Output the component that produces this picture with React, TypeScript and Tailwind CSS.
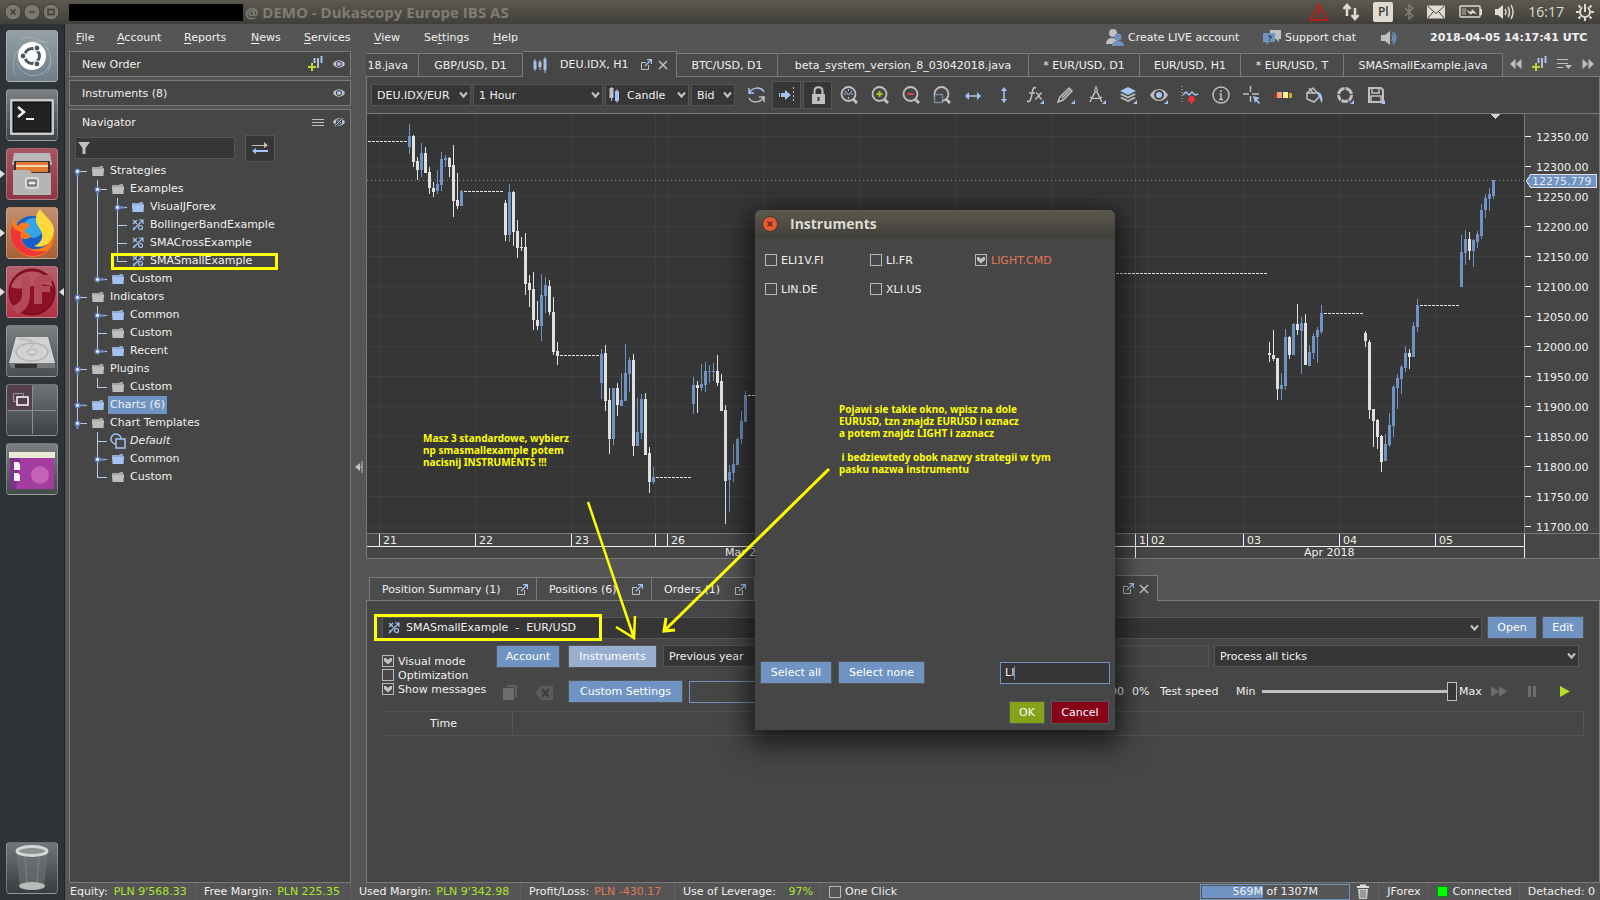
import React from 'react';
import clsx from 'clsx';

/* ---------- data ---------- */

// x, high, low, body top, body bottom, rising
type Candle = [number, number, number, number, number, 0 | 1];

const candles: Candle[] = [
    [409, 124, 154, 136, 147, 1], [413, 135, 167, 136, 162, 0], [417, 157, 180, 161, 170, 0], [421, 143, 177, 153, 170, 1],
    [425, 147, 173, 153, 173, 0], [429, 167, 194, 172, 188, 0], [433, 182, 197, 188, 192, 0], [437, 170, 194, 184, 191, 1],
    [441, 152, 191, 159, 185, 1], [445, 155, 167, 158, 160, 1], [449, 157, 177, 158, 167, 0], [453, 145, 217, 165, 201, 0],
    [457, 173, 209, 200, 206, 0], [461, 190, 206, 191, 206, 1],
    [505, 200, 241, 203, 235, 0], [509, 184, 242, 192, 235, 1], [513, 191, 246, 192, 232, 0], [517, 220, 258, 231, 248, 0],
    [521, 237, 251, 247, 248, 0], [525, 233, 295, 247, 284, 0], [529, 275, 307, 283, 290, 0], [533, 272, 330, 289, 320, 0],
    [537, 301, 330, 320, 326, 0], [541, 274, 341, 295, 326, 1], [545, 277, 313, 285, 296, 1], [549, 280, 315, 286, 312, 0],
    [553, 297, 355, 312, 352, 0], [557, 342, 365, 351, 356, 0],
    [601, 349, 399, 354, 383, 1], [605, 345, 411, 353, 401, 0], [609, 388, 454, 400, 439, 0], [613, 388, 445, 388, 439, 1],
    [617, 383, 416, 388, 405, 0], [621, 373, 406, 400, 406, 1], [625, 344, 401, 373, 401, 1], [629, 357, 392, 360, 374, 1],
    [633, 354, 456, 360, 446, 0], [637, 398, 446, 432, 446, 1], [641, 394, 439, 399, 433, 1], [645, 393, 455, 399, 455, 0],
    [649, 447, 493, 453, 482, 0], [653, 467, 484, 477, 482, 1],
    [693, 377, 414, 385, 404, 1], [697, 381, 413, 385, 388, 0], [701, 364, 391, 384, 388, 1], [705, 362, 392, 371, 385, 1],
    [709, 365, 383, 371, 372, 1], [713, 363, 381, 371, 372, 1], [717, 355, 386, 371, 383, 0], [721, 374, 411, 381, 411, 0],
    [725, 405, 524, 410, 481, 0], [729, 465, 512, 472, 480, 1], [733, 444, 482, 464, 473, 1], [737, 438, 465, 439, 465, 1],
    [741, 411, 444, 421, 439, 1], [745, 391, 422, 395, 422, 1],
    [1269, 342, 362, 353, 355, 0], [1273, 330, 361, 355, 359, 0], [1277, 358, 400, 358, 389, 0], [1281, 373, 400, 385, 389, 1],
    [1285, 329, 390, 337, 386, 1], [1289, 336, 359, 337, 355, 0], [1293, 323, 355, 324, 355, 1], [1297, 304, 335, 324, 330, 0],
    [1301, 317, 374, 323, 331, 1], [1305, 314, 365, 323, 365, 0], [1309, 345, 366, 352, 366, 1], [1313, 333, 359, 336, 353, 1],
    [1317, 327, 363, 330, 337, 1], [1321, 305, 334, 313, 332, 1],
    [1365, 331, 347, 333, 341, 0], [1369, 340, 419, 342, 410, 0], [1373, 409, 447, 409, 421, 0], [1377, 419, 449, 420, 437, 0],
    [1381, 435, 472, 436, 462, 0], [1385, 434, 461, 444, 461, 1], [1389, 413, 447, 425, 445, 1], [1393, 385, 437, 387, 426, 1],
    [1397, 374, 409, 378, 388, 1], [1401, 365, 394, 367, 379, 1], [1405, 346, 372, 353, 368, 1], [1409, 349, 369, 353, 357, 0],
    [1413, 322, 357, 326, 357, 1], [1417, 299, 332, 305, 327, 1],
    [1461, 235, 287, 252, 287, 1], [1465, 230, 265, 239, 253, 1], [1469, 232, 260, 239, 251, 0], [1473, 239, 267, 240, 251, 1],
    [1477, 231, 248, 234, 242, 1], [1481, 204, 239, 210, 236, 1], [1485, 194, 218, 198, 210, 1], [1489, 188, 211, 194, 199, 1],
    [1493, 180, 199, 180, 196, 1],
];

// x from, x to, y
const gaps = [
    [368, 407, 141], [464, 503, 191], [560, 599, 355], [656, 691, 477], [748, 800, 395],
    [1100, 1267, 273], [1324, 1363, 313], [1420, 1459, 305],
];

const prices = [
    '12350.00', '12300.00', '12250.00', '12200.00', '12150.00', '12100.00', '12050.00',
    '12000.00', '11950.00', '11900.00', '11850.00', '11800.00', '11750.00', '11700.00',
];

const gridX = [379, 475, 571, 655, 667, 763, 859, 955, 1051, 1135, 1147, 1243, 1339, 1435];

const days: [number, string][] = [
    [379, '21'], [475, '22'], [571, '23'], [655, ''], [667, '26'],
    [1135, '1'], [1147, '02'], [1243, '03'], [1339, '04'], [1435, '05'],
];

type Row = { guides: string; icon: 'grey' | 'blue' | 'strategy' | 'template'; label: string; mark?: 'selected' | 'box' | 'italic' };

// E/e/x expanded node (middle, first, last), C/c collapsed node (middle, last), t tee, l corner
const tree: Row[] = [
    { guides: 'e', icon: 'grey', label: 'Strategies' },
    { guides: '|E', icon: 'grey', label: 'Examples' },
    { guides: '||C', icon: 'blue', label: 'VisualJForex' },
    { guides: '||t', icon: 'strategy', label: 'BollingerBandExample' },
    { guides: '||t', icon: 'strategy', label: 'SMACrossExample' },
    { guides: '||l', icon: 'strategy', label: 'SMASmallExample', mark: 'box' },
    { guides: '|c', icon: 'blue', label: 'Custom' },
    { guides: 'E', icon: 'grey', label: 'Indicators' },
    { guides: '|C', icon: 'blue', label: 'Common' },
    { guides: '|t', icon: 'grey', label: 'Custom' },
    { guides: '|c', icon: 'blue', label: 'Recent' },
    { guides: 'E', icon: 'grey', label: 'Plugins' },
    { guides: '|l', icon: 'grey', label: 'Custom' },
    { guides: 'C', icon: 'blue', label: 'Charts (6)', mark: 'selected' },
    { guides: 'x', icon: 'grey', label: 'Chart Templates' },
    { guides: ' t', icon: 'template', label: 'Default', mark: 'italic' },
    { guides: ' C', icon: 'blue', label: 'Common' },
    { guides: ' l', icon: 'grey', label: 'Custom' },
];

/* ---------- small icons ---------- */

const G = '#c0c0c0';
const B = '#a3c4f3';

function Svg({ w, h, children, className }: { w: number; h: number; children: React.ReactNode; className?: string }) {
    return (
        <svg width={w} height={h} viewBox={`0 0 ${w} ${h}`} fill="none" className={clsx('shrink-0', className)} aria-hidden="true">
            {children}
        </svg>
    );
}

function Folder({ color }: { color: string }) {
    return (
        <Svg w={12} h={12}>
            <path d="M0 3V2h7l1-1h3v2h1v1H0z" fill={color} opacity=".8" />
            <path d="M0 4h12l-.5 7H.5z" fill={color} />
        </Svg>
    );
}

function StrategyIcon() {
    return (
        <Svg w={12} h={12}>
            <path d="M1 1l4 4M5 1L1 5M1 11L11 1M7 1h4v4" stroke={B} strokeWidth="1.2" />
            <circle cx="8.5" cy="8.5" r="2" stroke={B} strokeWidth="1.2" />
            <path d="M2 8v3" stroke={B} />
        </Svg>
    );
}

function TemplateIcon() {
    return (
        <Svg w={16} h={16}>
            <circle cx="6" cy="6" r="5" stroke={B} strokeWidth="1.5" />
            <path d="M6 6h9v9H6z" fill="#464646" stroke={B} strokeWidth="1.5" />
        </Svg>
    );
}

function EyeIcon({ off }: { off?: boolean }) {
    return (
        <Svg w={12} h={10}>
            <path d="M0 5C2 0 10 0 12 5 10 10 2 10 0 5z" fill={G} />
            <circle cx="6" cy="5" r="3" fill="#464646" />
            <circle cx="6" cy="5" r="2" fill={B} />
            {off && <path d="M1.500 9.500L10.500.5" stroke="#464646" strokeWidth="2.500" />}
            {off && <path d="M2 9L10 1" stroke={B} />}
        </Svg>
    );
}

function NewChartIcon() {
    return (
        <Svg w={15} h={16}>
            <path d="M4 7v8M0 11h8" stroke="#b8dc2c" strokeWidth="2" />
            <path d="M6.500 2v5M13.500 0v7" stroke={B} strokeWidth="2" />
            <path d="M10 2v10" stroke={G} strokeWidth="2" />
        </Svg>
    );
}

function Detach() {
    return (
        <Svg w={11} h={11}>
            <path d="M5 3.500H.5v7h7V6" stroke={G} />
            <path d="M4 7l6-6M6 .5h4.500V5" stroke={B} strokeWidth="1.300" />
        </Svg>
    );
}

function Cross() {
    return (
        <Svg w={10} h={10}>
            <path d="M1 1l8 8M9 1L1 9" stroke={G} strokeWidth="1.500" />
        </Svg>
    );
}

function Chevron() {
    return (
        <Svg w={9} h={8} className="pointer-events-none absolute right-[3px] top-[7px]">
            <path d="M1 1.500l3.500 4L8 1.500" stroke={G} strokeWidth="2.200" />
        </Svg>
    );
}

function PairOfArrows({ flip }: { flip?: boolean }) {
    return (
        <Svg w={12} h={10} className={flip ? 'rotate-180' : undefined}>
            <path d="M5.500 0v10L0 5zM11.500 0v10L6 5z" fill={G} />
        </Svg>
    );
}

/* ---------- controls ---------- */

function Check({ label, checked, className }: { label: string; checked?: boolean; className?: string }) {
    return (
        <label className={clsx('flex h-[14px] items-center gap-1 whitespace-nowrap', className)}>
            <span className="grid size-3">
                <input type="checkbox" defaultChecked={checked} className="peer col-start-1 row-start-1 size-3 appearance-none border border-[#b8b8b8]" />
                <svg viewBox="0 0 12 12" className="pointer-events-none invisible col-start-1 row-start-1 size-3 peer-checked:visible" fill="none" aria-hidden="true">
                    <path d="M2 3h2l2 2 2-2h2v3L6 9.500 2 6z" fill={G} />
                </svg>
            </span>
            {label}
        </label>
    );
}

function Select({ label, text, className, pad }: { label: string; text: string; className: string; pad?: string }) {
    return (
        <div className={clsx('relative h-[22px]', className)}>
            <select aria-label={label} className={clsx('h-full w-full appearance-none border border-[#555] bg-[#363636] pr-4 outline-none', pad ?? 'pl-[5px]')}>
                <option>{text}</option>
            </select>
            <Chevron />
        </div>
    );
}

function Button({ children, className }: { children: React.ReactNode; className: string }) {
    return (
        <button className={clsx('h-[23px] shrink-0 whitespace-nowrap border border-[#555] text-white', className)}>
            {children}
        </button>
    );
}

/* ---------- desktop ---------- */

function TopBar() {
    const c = '#dfdbd2';
    return (
        <header className="flex h-6 shrink-0 items-center bg-linear-to-b from-[#5c594e] to-[#403f3a] pl-1 pr-[6px] font-['Open_Sans',sans-serif]">
            <div className="flex gap-px">
                {['M5 5l5 5M10 5l-5 5', 'M4.500 7.500h6', 'M4.500 5h6v5h-6z'].map((d) => (
                    <button key={d} aria-label="Window control">
                        <Svg w={18} h={18}>
                            <circle cx="9" cy="9" r="8" fill="#7b786d" stroke="#3a3934" />
                            <path d={d} stroke="#3a3934" strokeWidth="1.300" transform="translate(1.500 1.500)" />
                        </Svg>
                    </button>
                ))}
            </div>
            <div className="ml-[9px] h-[17px] w-[174px] shrink-0 bg-black" />
            <h1 className="ml-[2px] whitespace-nowrap text-[15px] font-bold text-[#807d74]">@ DEMO - Dukascopy Europe IBS AS</h1>
            <div className="ml-auto flex items-center">
                <Svg w={20} h={20}>
                    <path d="M10 2L1 18h18z" stroke="#e01010" strokeWidth="1.300" />
                    <path d="M10 7v6M10 14.500v2" stroke="#e01010" strokeWidth="1.500" />
                </Svg>
                <Svg w={18} h={18} className="ml-[13px]">
                    <path d="M5 13V3M1.500 6L5 2l3.500 4" stroke={c} strokeWidth="2.500" />
                    <path d="M13 5v10M9.500 12l3.500 4 3.500-4" stroke={c} strokeWidth="2.500" />
                </Svg>
                <span className="ml-[13px] flex h-5 w-5 items-center justify-center rounded-xs bg-[#dfdbd2] text-xs font-semibold text-[#3c3b37]">Pl</span>
                <Svg w={10} h={16} className="ml-[11px]">
                    <path d="M1 4l8 8-4 3V1l4 3-8 8" stroke="#85827a" strokeWidth="1.300" />
                </Svg>
                <Svg w={18} h={14} className="ml-[13px]">
                    <rect width="18" height="13" y=".5" rx="1" fill={c} />
                    <path d="M1 1.500l8 7 8-7M1 13l5-6M17 13l-5-6" stroke="#45443e" />
                </Svg>
                <Svg w={24} h={14} className="ml-[14px]">
                    <rect x="1" y="1" width="20" height="11" rx="1" stroke={c} strokeWidth="1.500" />
                    <path d="M22 4v6" stroke={c} strokeWidth="2" />
                    <path d="M3 3h4v7H3z" fill="#85827a" />
                    <path d="M7 5l5 2 1-3 5 5-5-1-1 2z" fill={c} />
                </Svg>
                <Svg w={20} h={18} className="ml-3">
                    <path d="M0 6h3l5-4v14l-5-4H0z" fill={c} />
                    <path d="M10 6q2 3 0 6M13 4q3 5 0 10M16 2q4 7 0 14" stroke={c} strokeWidth="1.500" />
                </Svg>
                <span className="ml-[13px] text-sm text-[#dfdbd2]">16:17</span>
                <Svg w={18} h={18} className="ml-3">
                    <circle cx="9" cy="9" r="5" stroke={c} strokeWidth="2" />
                    <path d="M9 15v3M0 9h3M15 9h3M2.500 2.500l2 2M13.500 13.500l2 2M2.500 15.500l2-2M13.500 4.500l2-2" stroke={c} strokeWidth="2" />
                    <path d="M9 1v8" stroke="#4a4942" strokeWidth="5" />
                    <path d="M9 1v8" stroke={c} strokeWidth="2" />
                </Svg>
            </div>
        </header>
    );
}

function Tile({ tone, running, active, children }: { tone: string; running?: boolean; active?: boolean; children: React.ReactNode }) {
    return (
        <a href="#app" aria-label="Application" className="flex h-[52px] items-center">
            <Svg w={6} h={10}>{running && <path d="M0 1l5 4-5 4z" fill="#ddd" />}</Svg>
            <span className={clsx('flex size-[52px] items-center justify-center overflow-hidden rounded border border-white/25 bg-linear-to-b', tone)}>
                {children}
            </span>
            <Svg w={6} h={10}>{active && <path d="M6 1L1 5l5 4z" fill="#ddd" />}</Svg>
        </a>
    );
}

function Launcher() {
    return (
        <nav className="flex w-[65px] shrink-0 flex-col gap-[7px] border-r border-[#222] bg-[#2d3336] pb-[6px] pt-[6px]">
            <Tile tone="from-[#94a0a5] to-[#6f7f88]">
                <Svg w={50} h={50}>
                    <path d="M8 44C0 22 20 4 42 12M14 8c20-8 38 16 26 34M44 30C40 48 16 50 10 32" stroke="#b4c0c5" opacity=".6" />
                    <circle cx="25" cy="25" r="14" fill="#fff" />
                    <circle cx="25" cy="25" r="7.500" stroke="#50575b" strokeWidth="3" />
                    <g fill="#50575b" stroke="#fff" strokeWidth="1.200">
                        <circle cx="16" cy="25" r="3" />
                        <circle cx="30" cy="17" r="3" />
                        <circle cx="30" cy="33" r="3" />
                    </g>
                </Svg>
            </Tile>
            <Tile tone="from-[#7d8183] to-[#3e4446]">
                <Svg w={50} h={50}>
                    <rect x="3" y="9" width="44" height="36" rx="1" fill="#c9c9c9" />
                    <rect x="6" y="12" width="38" height="30" fill="#222" stroke="#000" />
                    <path d="M11 17l6 5-6 5" stroke="#eee" strokeWidth="2.500" />
                    <path d="M19 29h8" stroke="#eee" strokeWidth="2" />
                </Svg>
            </Tile>
            <Tile tone="from-[#a65563] to-[#8d3644]" running>
                <Svg w={50} h={50}>
                    <path d="M7 4h36l2 12H5z" fill="#b8b8b8" />
                    <path d="M7 12h36v14H7z" fill="#333" />
                    <path d="M9 13h32v10H9z" fill="#e07a35" />
                    <path d="M9 16h32v2H9z" fill="#f7d9b0" />
                    <path d="M6 21h16l3 3h19v22H6z" fill="#b5b5b5" />
                    <rect x="19" y="29" width="12" height="10" rx="2" stroke="#e8e8e8" strokeWidth="1.500" fill="#999" />
                    <path d="M21 32h8v4h-8z" fill="#eee" stroke="#555" />
                </Svg>
            </Tile>
            <Tile tone="from-[#c09070] to-[#a85f38]" running>
                <Svg w={50} h={50}>
                    <circle cx="25" cy="26" r="18" fill="#1560c8" />
                    <circle cx="26" cy="20" r="10" fill="#35a5ea" />
                    <path d="M33 1c-6 8-5 13 0 20 5 7 1 15-6 17 10 3 21-4 20-16C46 12 37 8 33 1z" fill="#ffd83a" />
                    <path d="M7 9c-7 13-4 38 18 40 14 0 23-10 22-25-2 10-8 16-17 17-9 1-15-4-15-11 3 2 7 1 9-2l-7-5 6-6c-5-4-10-3-12 1-3-2-4-5-4-9z" fill="#ff7a1a" />
                    <path d="M5 17c-4 14 3 29 19 31 7 0 12-2 16-5-17 3-28-6-26-19-4-1-7-3-9-7z" fill="#f0353a" />
                </Svg>
            </Tile>
            <Tile tone="from-[#b5606c] to-[#b03348]" running active>
                <Svg w={50} h={50}>
                    <circle cx="25" cy="25" r="23" fill="#8c1223" stroke="#5e0a17" />
                    <path d="M4 20a22 22 0 0 1 42 0c-14-8-28 6-42 0z" fill="#d88a94" opacity=".55" />
                    <path d="M15 9h8v18c0 10-4 17-13 20l-6-8c8-2 11-5 11-13z" fill="#b24a58" />
                    <path d="M27 37V16c0-5 4-8 10-8h8v7h-6c-3 0-4 1-4 4h8v6h-8v12z" fill="#b24a58" />
                </Svg>
            </Tile>
            <Tile tone="from-[#7b7f80] to-[#4a5052]">
                <Svg w={50} h={50}>
                    <path d="M9 11h32l7 26H2z" fill="#d2d2d2" />
                    <ellipse cx="25" cy="26" rx="16" ry="9" stroke="#b3b3b3" strokeWidth="1.500" />
                    <ellipse cx="25" cy="26" rx="5" ry="3" stroke="#aaa" />
                    <path d="M12 13c10 0 18 2 12 8" stroke="#bbb" strokeWidth="2" />
                    <path d="M2 37h46v5H4z" fill="#777" />
                    <path d="M8 38h22v4H8z" fill="#333" />
                </Svg>
            </Tile>
            <Tile tone="from-[#707476] to-[#3d4345]">
                <Svg w={50} h={50}>
                    <path d="M0 0h25v25H0z" fill="#54404a" />
                    <path d="M25.500 1v48M1 25.500h48" stroke="#8b8f91" />
                    <path d="M6.500 8.500h10v8h-10z" stroke="#999" />
                    <path d="M10 12h11v8H10z" fill="#54404a" stroke="#fff" strokeWidth="1.500" />
                </Svg>
            </Tile>
            <Tile tone="from-[#7b7f80] to-[#454b4d]">
                <Svg w={50} h={50}>
                    <path d="M3 14h44v31H3z" fill="#a53da0" />
                    <circle cx="33" cy="31" r="9" fill="#cf74bf" opacity=".7" />
                    <path d="M3 14h10L9 45H3z" fill="#6d2f86" opacity=".7" />
                    <path d="M2 8h46v6H2z" fill="#ece8d8" />
                    <path d="M7 18h4l2 2v6H7zM7 29h4l2 2v6H7z" fill="#f4f4f4" />
                </Svg>
            </Tile>
            <div className="mt-auto">
                <Tile tone="from-[#70767a] to-[#373e41]">
                    <Svg w={50} h={50}>
                        <path d="M9 9h32l-4 35H13z" fill="#6f7679" opacity=".6" />
                        <ellipse cx="25" cy="43" rx="13" ry="4" fill="#b9bbb8" />
                        <ellipse cx="25" cy="8" rx="15" ry="4.500" stroke="#d6d6d6" strokeWidth="3" fill="#8d9294" />
                        <path d="M18 14l2 25M32 14l-2 25" stroke="#7a8083" />
                    </Svg>
                </Tile>
            </div>
        </nav>
    );
}

/* ---------- application ---------- */

const menuItems = [
    ['', 'F', 'ile', 'w-[41px]'],
    ['', 'A', 'ccount', 'w-[67px]'],
    ['', 'R', 'eports', 'w-[67px]'],
    ['', 'N', 'ews', 'w-[53px]'],
    ['', 'S', 'ervices', 'w-[70px]'],
    ['', 'V', 'iew', 'w-[50px]'],
    ['Se', 't', 'tings', 'w-[69px]'],
    ['', 'H', 'elp', 'w-[50px]'],
];

function MenuBar() {
    return (
        <div className="flex h-[27px] shrink-0 items-center pl-[11px] pr-[6px]">
            {menuItems.map(([a, b, c, width]) => (
                <button key={b} className={clsx('shrink-0 whitespace-nowrap text-left', width)}>
                    {a}<span className="underline underline-offset-2">{b}</span>{c}
                </button>
            ))}
            <button className="ml-auto flex w-[157px] shrink-0 items-center gap-1 whitespace-nowrap">
                <Svg w={18} h={18}>
                    <circle cx="7" cy="4" r="4" fill={G} />
                    <path d="M0 15c0-8 12-8 12 0z" fill={G} />
                    <circle cx="12" cy="8" r="3.500" fill="#6f93c2" />
                    <path d="M6 17c0-7 12-7 12 0z" fill="#6f93c2" />
                </Svg>
                Create LIVE account
            </button>
            <button className="flex w-[118px] shrink-0 items-center gap-1 whitespace-nowrap">
                <Svg w={18} h={15}>
                    <path d="M7 0h11v9h-2v3l-3-3H7z" fill={G} />
                    <path d="M0 3h12v9H6l-3 3v-3H0z" fill="#6f93c2" />
                    <path d="M5 6h3v2H6.500M6.500 9.500V11" stroke="#333" />
                </Svg>
                Support chat
            </button>
            <button aria-label="Sound" className="w-[49px] shrink-0">
                <Svg w={17} h={14}>
                    <path d="M0 4h4l5-4v14l-5-4H0z" fill={G} />
                    <path d="M11 4q2 3 0 6M12 1q5 6 0 12" stroke="#6f93c2" strokeWidth="1.800" />
                </Svg>
            </button>
            <span className="w-[164px] shrink-0 whitespace-nowrap font-bold">2018-04-05 14:17:41 UTC</span>
        </div>
    );
}

function Guide({ kind }: { kind: string }) {
    const up = 'ExCctl|'.includes(kind);
    const down = 'EeCt|'.includes(kind);
    const node = 'EexCc'.includes(kind);
    return (
        <Svg w={20} h={18}>
            {up && <path d="M7.500 0v9" stroke="#b7cbe8" />}
            {down && <path d="M7.500 9v9" stroke="#b7cbe8" />}
            {!'| '.includes(kind) && <path d="M7 9.500h10" stroke="#b7cbe8" />}
            {'Eex'.includes(kind) && <path d="M7.500 9v6" stroke="#6f93d0" strokeWidth="2" />}
            {'Cc'.includes(kind) && <path d="M7 9.500h8" stroke="#6f93d0" strokeWidth="2" />}
            {node && <circle cx="7.500" cy="9.500" r="2.200" fill="#fff" stroke="#5d80c4" strokeWidth="1.600" />}
        </Svg>
    );
}

function Navigator() {
    return (
        <section className="flex flex-1 flex-col border border-[#7a7a7a] bg-[#464646]">
            <header className="flex h-6 items-center pl-3 pr-[5px]">
                <h2>Navigator</h2>
                <button aria-label="Menu" className="ml-auto">
                    <Svg w={12} h={9}><path d="M0 1.500h12M0 4.500h12M0 7.500h12" stroke={G} /></Svg>
                </button>
                <button aria-label="Hide" className="ml-[9px]"><EyeIcon off /></button>
            </header>
            <div className="flex h-7 items-center gap-[10px] pl-[5px]">
                <label className="flex h-[22px] w-[160px] items-center border border-[#555] bg-[#363636] pl-[2px]">
                    <Svg w={12} h={12}><path d="M0 0h12L7.500 6v6h-3V6z" fill={G} /></Svg>
                    <input aria-label="Filter" className="ml-1 w-full min-w-0 bg-transparent outline-none" />
                </label>
                <button aria-label="Synchronise" className="flex h-[27px] w-[30px] items-center justify-center border border-[#555] bg-[#363636]">
                    <Svg w={16} h={12}>
                        <path d="M0 3h12V0l4 3.500L12 6V4H0z" fill={G} />
                        <path d="M16 8H4V6L0 9l4 3v-2h12z" fill={B} />
                    </Svg>
                </button>
            </div>
            <ul>
                {tree.map((row, i) => (
                    <li key={i} className="flex h-[18px] items-center">
                        {row.guides.split('').map((g, j) => <Guide key={j} kind={g} />)}
                        <span className={row.icon === 'template' ? 'flex w-[18px] shrink-0' : 'ml-[2px] flex w-4 shrink-0'}>
                            {row.icon === 'grey' && <Folder color="#bdbdbd" />}
                            {row.icon === 'blue' && <Folder color={B} />}
                            {row.icon === 'strategy' && <StrategyIcon />}
                            {row.icon === 'template' && <TemplateIcon />}
                        </span>
                        <span className={clsx('h-full whitespace-nowrap px-[2px] leading-[18px]', row.mark === 'selected' && 'bg-[#6f93c2]', row.mark === 'italic' && 'italic')}>
                            {row.label}
                        </span>
                    </li>
                ))}
            </ul>
        </section>
    );
}

function SidePanel() {
    return (
        <aside className="ml-1 flex w-[282px] shrink-0 flex-col gap-[3px]">
            <header className="flex h-[26px] items-center border border-[#7a7a7a] bg-[#464646] pl-3 pr-[5px]">
                <h2>New Order</h2>
                <button aria-label="Add" className="ml-auto"><NewChartIcon /></button>
                <button aria-label="Show" className="ml-[10px]"><EyeIcon /></button>
            </header>
            <header className="flex h-[26px] items-center border border-[#7a7a7a] bg-[#464646] pl-3 pr-[5px]">
                <h2>Instruments (8)</h2>
                <button aria-label="Show" className="ml-auto"><EyeIcon /></button>
            </header>
            <Navigator />
        </aside>
    );
}

function ChartTabs() {
    const tab = 'h-6 shrink-0 whitespace-nowrap border-y border-r border-[#7a7a7a] bg-[#4b4b4b]';
    return (
        <div className="flex h-[26px] shrink-0 items-end">
            <button className={clsx(tab, 'flex w-[53px] items-center justify-end pr-[10px]')}>18.java</button>
            <button className={clsx(tab, 'w-[104px]')}>GBP/USD, D1</button>
            <div className="flex h-[26px] w-[154px] shrink-0 items-center border-r border-t border-[#7a7a7a] bg-[#464646] pl-[10px] pr-2">
                <Svg w={14} h={16}>
                    <path d="M2 2v12M12 0v16" stroke={B} />
                    <path d="M2 4v8M12 2v11" stroke={B} strokeWidth="3" />
                    <path d="M7 3v10" stroke={G} />
                    <path d="M7 5v5" stroke={G} strokeWidth="3" />
                </Svg>
                <button className="ml-[13px] whitespace-nowrap">DEU.IDX, H1</button>
                <button aria-label="Detach" className="ml-auto mr-[6px]"><Detach /></button>
                <button aria-label="Close"><Cross /></button>
            </div>
            <button className={clsx(tab, 'w-[101px]')}>BTC/USD, D1</button>
            <button className={clsx(tab, 'w-[251px]')}>beta_system_version_8_03042018.java</button>
            <button className={clsx(tab, 'w-[111px]')}>* EUR/USD, D1</button>
            <button className={clsx(tab, 'w-[101px]')}>EUR/USD, H1</button>
            <button className={clsx(tab, 'w-[103px]')}>* EUR/USD, T</button>
            <button className={clsx(tab, 'w-[159px]')}>SMASmallExample.java</button>
            <div className="flex h-[26px] flex-1 items-center justify-end gap-[10px] border-b border-[#7a7a7a] pr-[6px]">
                <button aria-label="Previous"><PairOfArrows /></button>
                <button aria-label="New chart"><NewChartIcon /></button>
                <button aria-label="Tab list">
                    <Svg w={15} h={12}><path d="M0 1.500h11M0 5.500h11M0 9.500h6" stroke={G} /><path d="M8 7h7l-3.500 4z" fill={G} /></Svg>
                </button>
                <button aria-label="Next"><PairOfArrows flip /></button>
            </div>
        </div>
    );
}

const lens = (
    <>
        <circle cx="8.500" cy="8" r="7" stroke={G} strokeWidth="1.800" />
        <path d="M13 13l4 4" stroke={G} strokeWidth="3" />
    </>
);
const corner = <path d="M18 14v4h-4z" fill={B} />;

const tools: { name: string; pressed?: boolean; art: React.ReactNode }[] = [
    { name: 'Refresh', art: <><path d="M2 8c2-7 12-8 15-2M2 2v5h5" stroke={B} strokeWidth="1.500" /><path d="M17 10c-2 7-12 8-15 2M17 16v-5h-5" stroke={G} strokeWidth="1.500" /></> },
    { name: 'Autoshift', pressed: true, art: <><path d="M1 7h1v4H1zM3 7h4V4l6 5-6 5v-3H3z" fill={B} /><path d="M15.500 1v16" stroke={G} strokeDasharray="2 2" /></> },
    { name: 'Lock', pressed: true, art: <><path d="M3 8h13v10H3z" fill={G} /><path d="M5.500 8V5c0-5 8-5 8 0v3" stroke={G} strokeWidth="2" /><path d="M9.500 11v4" stroke="#333" strokeWidth="2" /></> },
    { name: 'Zoom time', art: <>{lens}<path d="M5 5l3.500 4L12 5M4 8h2M11 8h2M8.500 3v2M8.500 11v2" stroke={B} /></> },
    { name: 'Zoom in', art: <>{lens}<path d="M8.500 5v6M5.500 8h6" stroke="#a8c814" strokeWidth="2" /></> },
    { name: 'Zoom out', art: <>{lens}<path d="M5.500 8h6" stroke="#e04050" strokeWidth="2" /></> },
    { name: 'Zoom area', art: <>{lens}<path d="M1.500 8.500h8v8h-8z" fill="#464646" stroke={B} strokeDasharray="1 1" strokeWidth="1.500" /></> },
    { name: 'Horizontal', art: <><path d="M2 10h14" stroke={B} strokeWidth="1.500" /><path d="M5 6l-4 4 4 4zM13 6l4 4-4 4z" fill={B} /></> },
    { name: 'Vertical', art: <><path d="M9 2v14" stroke={B} strokeWidth="1.500" /><path d="M6 5l3-4 3 4zM6 13l3 4 3-4z" fill={B} /></> },
    { name: 'Indicators', art: <><path d="M10 2C6 0 7 6 5 12c-1 4-2 4-4 3M3 7h6M10 7c3-1 3 7 6 6M16 7c-3 0-4 6-7 6" stroke={G} strokeWidth="1.500" />{corner}</> },
    { name: 'Draw', art: <><path d="M3 11L12 2l3 3-9 9-5 2z" stroke={G} strokeWidth="1.500" /><path d="M5 12l8-8" stroke={G} strokeWidth="1.500" />{corner}</> },
    { name: 'Measure', art: <><circle cx="8" cy="4" r="1.500" stroke={G} /><path d="M7.500 5L2 16M8.500 5L14 16M8 0v3M2 11c3 2 9 2 12 0" stroke={G} strokeWidth="1.500" />{corner}</> },
    { name: 'Layers', art: <><path d="M1 12l8 4 8-4-2-1-6 3-6-3z" fill={G} /><path d="M1 8.500l8 4 8-4-2-1-6 3-6-3z" fill={G} /><path d="M9 1l8 4-8 4-8-4z" fill={B} />{corner}</> },
    { name: 'Visibility', art: <><path d="M0 9C4 1 14 1 18 9 14 17 4 17 0 9z" fill={G} /><circle cx="9" cy="9" r="5" fill="#464646" /><circle cx="9" cy="9" r="3" fill={B} />{corner}</> },
    { name: 'Trades', art: <><path d="M1 0v18" stroke={G} strokeDasharray="1 2" /><path d="M2 9l3-3 3 3 3-3 3 3 3-1" stroke={B} strokeWidth="1.500" /><path d="M8 10h5v3h2l-4.500 5L6 13h2z" fill="#e83040" /></> },
    { name: 'Info', art: <><circle cx="9" cy="9" r="8" stroke={G} strokeWidth="1.500" /><path d="M9 4v2M7.500 8H9v5M7 13.500h4" stroke={G} strokeWidth="1.500" /></> },
    { name: 'Crosshair', art: <><path d="M7.500 0v6M7.500 10v6M0 8h6M9 8h7" stroke={G} strokeWidth="1.500" /><path d="M10 10l7 2-3 1.500L17 17l-1 1-3-3-1 2z" fill={B} /></> },
    { name: 'Themes', art: <><path d="M0 7h3v5H0z" fill="#b03020" /><path d="M3 6h5v6H3z" fill="#f0a080" /><path d="M9 6h5v6H9z" fill="#f8f098" /><path d="M15 7h3v5h-3z" fill="#c8b020" /></> },
    { name: 'Fill', art: <><path d="M2 7l6-5 7 8-6 6-7-3zM1 7h13M4 2l5 6" stroke={G} strokeWidth="1.500" /><path d="M13 6c4 1 5 6 4 11-2-2-2-6-4-8z" fill={B} /></> },
    { name: 'Snapshot', art: <><circle cx="9" cy="9" r="6.500" stroke={G} strokeWidth="3" /><path d="M9 0v5M18 8l-5 1M14 17l-3-5M4 17l2-5M0 8l5 1" stroke="#464646" />{corner}</> },
    { name: 'Save', art: <><path d="M2 2h12l2 2v12H2z" stroke={G} strokeWidth="2" /><path d="M5 2h7v5H5zM4 10h10v6H4z" stroke={G} strokeWidth="1.500" />{corner}</> },
];

function ChartToolbar() {
    return (
        <div className="flex h-9 shrink-0 items-center border-r border-[#7a7a7a] bg-[#464646] pl-1">
            <div className="flex shrink-0 gap-[2px]">
                <Select label="Instrument" text="DEU.IDX/EUR" className="w-[100px]" />
                <Select label="Period" text="1 Hour" className="w-[130px]" />
                <div className="relative">
                    <Select label="Chart type" text="Candle" className="w-[84px]" pad="pl-[21px]" />
                    <Svg w={10} h={16} className="pointer-events-none absolute left-1 top-[3px]">
                        <path d="M2.500 0v14" stroke={G} /><path d="M2.500 1v10" stroke={G} strokeWidth="4" />
                        <path d="M8 2v14" stroke={B} /><path d="M8 4v10" stroke={B} strokeWidth="4" />
                    </Svg>
                </div>
                <Select label="Side" text="Bid" className="w-[44px]" />
            </div>
            <div className="ml-[5px] flex">
                {tools.map((t) => (
                    <button key={t.name} aria-label={t.name} className="flex h-7 w-[31px] items-center justify-center">
                        <span className={clsx('flex h-7 w-[29px] items-center justify-center', t.pressed && 'border border-[#555] bg-[#363636]')}>
                            <Svg w={18} h={18}>{t.art}</Svg>
                        </span>
                    </button>
                ))}
            </div>
        </div>
    );
}

function Chart() {
    return (
        <svg viewBox="367 113 1233 446" preserveAspectRatio="xMaxYMin slice" className="block h-[446px] w-full shrink-0 bg-[#464646]" shapeRendering="crispEdges" fontFamily="'DejaVu Sans', sans-serif" fontSize="11" role="img" aria-label="DEU.IDX/EUR hourly chart">
            <rect x="367" y="114" width="1157" height="419" fill="#363636" />
            <g fill="#3f3f3f">
                {prices.map((p, i) => <rect key={p} x="367" y={136 + i * 30} width="1157" height="1" />)}
                {gridX.map((x) => <rect key={x} x={x} y="114" width="1" height="419" />)}
            </g>
            <path d="M367 180.500H1524" stroke="#8a8a8a" strokeDasharray="1 3" />
            {gaps.map(([a, b, y]) => <path key={a} d={`M${a} ${y}.5H${b}`} stroke="#e0e0e0" strokeDasharray="3 1" />)}
            {candles.map(([x, hi, lo, top, bottom, up]) => (
                <g key={x} fill={up ? '#6f93c2' : '#e0e0e0'}>
                    <rect x={x} y={hi} width="1" height={lo - hi} />
                    <rect x={x - 1} y={top} width="3" height={bottom - top} />
                </g>
            ))}
            <path d="M1490 114h10l-5 5z" fill="#d0d0d0" />
            <path d="M367 113.500H1600M1524.500 114V533M367 533.500H1600" stroke="#7a7a7a" />
            <path d="M1599.500 113V559M367 558.500H1600" stroke="#7a7a7a" />
            <g fill="#f0f0f0">
                {prices.map((p, i) => (
                    <g key={p}>
                        <rect x="1525" y={136 + i * 30} width="6" height="1" />
                        <text x="1536" y={141 + i * 30}>{p}</text>
                    </g>
                ))}
                {days.map(([x, d]) => (
                    <g key={x}>
                        <rect x={x} y="534" width="1" height="12" />
                        <text x={x + 4} y="544">{d}</text>
                    </g>
                ))}
                <rect x="367" y="546" width="1158" height="1" />
                <rect x="1135" y="547" width="1" height="11" />
                <rect x="1524" y="534" width="1" height="24" />
                <text x="725" y="556">Mar 2018</text>
                <text x="1304" y="556">Apr 2018</text>
            </g>
            <path d="M1530.500 174.500H1596.500V187.500H1530.500L1526.500 181z" fill="#6f93c2" stroke="#e0e0e0" />
            <text x="1532" y="185" fill="#e8e8e8">12275.779</text>
        </svg>
    );
}

function BottomTabs() {
    const tab = 'flex h-6 shrink-0 items-center justify-between whitespace-nowrap border-y border-r border-[#7a7a7a] bg-[#4b4b4b] pl-3 pr-2';
    return (
        <div className="flex h-[26px] shrink-0 items-end">
            <div className="h-6 w-[3px] border-b border-[#7a7a7a]" />
            <div className={clsx(tab, 'w-[168px] border-l')}><button>Position Summary (1)</button><Detach /></div>
            <div className={clsx(tab, 'w-[115px]')}><button>Positions (6)</button><Detach /></div>
            <div className={clsx(tab, 'w-[103px]')}><button>Orders (1)</button><Detach /></div>
            <div className="flex h-[26px] w-[403px] shrink-0 items-center justify-end gap-[5px] border-r border-t border-[#7a7a7a] bg-[#464646] pr-2">
                <button aria-label="Detach"><Detach /></button>
                <button aria-label="Close"><Cross /></button>
            </div>
            <div className="h-6 flex-1 border-b border-[#7a7a7a]" />
        </div>
    );
}

function Tester() {
    return (
        <div className="flex flex-1 flex-col border border-t-0 border-[#7a7a7a] bg-[#464646] px-[15px] pt-[15px]">
            <div className="flex items-center">
                <div className="relative flex-1">
                    <Select label="Strategy" text={'SMASmallExample\u00a0 -\u00a0 EUR/USD'} className="w-full" pad="pl-[23px]" />
                    <span className="pointer-events-none absolute left-[6px] top-[5px]"><StrategyIcon /></span>
                </div>
                <Button className="ml-[5px] w-[50px] bg-[#6f93c2]">Open</Button>
                <Button className="ml-[5px] w-[42px] bg-[#6f93c2]">Edit</Button>
            </div>
            <div className="mt-[6px] flex">
                <div className="w-[114px] shrink-0 pt-[9px]">
                    <Check label="Visual mode" checked />
                    <Check label="Optimization" />
                    <Check label="Show messages" checked />
                </div>
                <div className="w-[72px] shrink-0">
                    <Button className="w-[64px] bg-[#6f93c2]">Account</Button>
                    <div className="mt-[17px] flex items-center gap-[18px] pl-[7px]">
                        <button aria-label="Copy">
                            <Svg w={14} h={15}><path d="M4 0h10v12h-2V2H4z" fill="#606060" /><path d="M0 3h11v12H0z" fill="#6c6c6c" /></Svg>
                        </button>
                        <button aria-label="Clear">
                            <Svg w={18} h={14}><path d="M6 0h12v14H6L0 7z" fill="#5c5c5c" /><path d="M7 3l7 8M14 3l-7 8" stroke="#3c3c3c" strokeWidth="2" /></Svg>
                        </button>
                    </div>
                </div>
                <div className="flex-1">
                    <div className="flex">
                        <Button className="w-[89px] bg-[#98aed0]">Instruments</Button>
                        <Select label="Range" text="Previous year" className="ml-[6px] w-[200px]" />
                        <div className="ml-1 h-[22px] flex-1 border border-[#555] bg-[#464646]" />
                        <Select label="Ticks" text="Process all ticks" className="ml-[5px] mr-[5px] w-[365px]" />
                    </div>
                    <div className="mt-3 flex items-center">
                        <Button className="w-[115px] bg-[#6f93c2]">Custom Settings</Button>
                        <input aria-label="Progress" className="ml-[6px] h-[22px] w-0 flex-1 border border-[#6f93c2] bg-[#464646]" />
                        <span className="w-[50px] text-right">00</span>
                        <span className="ml-2 w-[28px]">0%</span>
                        <label htmlFor="speed" className="w-[76px] whitespace-nowrap">Test speed</label>
                        <span className="w-[26px]">Min</span>
                        <input
                            id="speed"
                            type="range"
                            defaultValue={100}
                            className="h-5 w-[195px] appearance-none bg-transparent [&::-webkit-slider-runnable-track]:h-[3px] [&::-webkit-slider-runnable-track]:bg-[#c0c0c0] [&::-webkit-slider-thumb]:-mt-2 [&::-webkit-slider-thumb]:h-[19px] [&::-webkit-slider-thumb]:w-[10px] [&::-webkit-slider-thumb]:appearance-none [&::-webkit-slider-thumb]:border [&::-webkit-slider-thumb]:border-[#c0c0c0] [&::-webkit-slider-thumb]:bg-[#363636]"
                        />
                        <span className="ml-[2px] w-8">Max</span>
                        <button aria-label="Fast forward"><Svg w={17} h={11}><path d="M0 0l8 5.500L0 11zM8 0l8 5.500L8 11z" fill="#6c6c6c" /></Svg></button>
                        <button aria-label="Pause" className="ml-5"><Svg w={8} h={11}><path d="M0 0h3v11H0zM5 0h3v11H5z" fill="#6c6c6c" /></Svg></button>
                        <button aria-label="Play" className="ml-6 mr-[14px]"><Svg w={10} h={11}><path d="M0 0l10 5.500L0 11z" fill="#b8dc2c" /></Svg></button>
                    </div>
                </div>
            </div>
            <table className="mt-2 w-full table-fixed border-collapse border border-[#555]">
                <thead>
                    <tr className="h-6">
                        <th className="w-[130px] border border-[#555] border-l-[#464646] pr-2 font-normal">Time</th>
                        <th className="border border-[#555]" />
                    </tr>
                </thead>
            </table>
        </div>
    );
}

function StatusBar() {
    const cell = 'flex h-full items-center gap-[5px] whitespace-nowrap border-r border-[#606060] pr-[7px] pl-2';
    return (
        <footer className="flex h-[17px] shrink-0 items-center pr-[5px]">
            <div className={clsx(cell, 'w-[131px]')}><span className="-ml-[3px]">Equity:</span><span className="ml-px text-[#a8e828]">PLN 9'568.33</span></div>
            <div className={clsx(cell, 'w-[155px]')}>Free Margin: <span className="text-[#a8e828]">PLN 225.35</span></div>
            <div className={clsx(cell, 'w-[170px]')}>Used Margin: <span className="text-[#a8e828]">PLN 9'342.98</span></div>
            <div className={clsx(cell, 'w-[154px]')}>Profit/Loss: <span className="text-[#e07858]">PLN -430.17</span></div>
            <div className={clsx(cell, 'w-[146px] justify-between')}>Use of Leverage: <span className="text-[#a8e828]">97%</span></div>
            <Check label="One Click" className="ml-2" />
            <div className="ml-auto h-4 w-[150px] border border-[#6f93c2] p-px">
                <div className="flex h-full items-center justify-center bg-linear-to-r from-[#6f93c2] from-[42%] to-transparent to-[42%]">569M of 1307M</div>
            </div>
            <button aria-label="Collect garbage" className="ml-[6px]">
                <Svg w={14} h={15}><path d="M1 3h12M4 1.500h6" stroke="#ddd" strokeWidth="2" /><path d="M2 5h10l-1 10H3z" fill="#ccc" /><path d="M5 6v8M7 6v8M9 6v8" stroke="#666" /></Svg>
            </button>
            <div className="ml-2 h-full border-l border-[#606060]" />
            <div className={cell}>JForex</div>
            <div className={clsx(cell, 'gap-[3px]')}><span className="size-[11px] border border-[#0a8a0a] bg-[#0f0]" />Connected</div>
            <span className="whitespace-nowrap pl-2">Detached: 0</span>
        </footer>
    );
}

function InstrumentsDialog() {
    return (
        <div role="dialog" aria-label="Instruments" className="absolute left-[755px] top-[210px] flex h-[520px] w-[360px] flex-col rounded-t-md bg-[#464646] shadow-[0_8px_28px_6px_rgba(0,0,0,0.65)]">
            <header className="flex h-7 items-center gap-3 rounded-t-md bg-linear-to-b from-[#5c594e] to-[#403f3a] pl-[7px]">
                <button aria-label="Close">
                    <Svg w={16} h={16}>
                        <circle cx="8" cy="8" r="7.500" fill="#e9582e" stroke="#3a3934" />
                        <path d="M5.500 5.500l5 5M10.500 5.500l-5 5" stroke="#4a2a1e" strokeWidth="1.300" />
                    </Svg>
                </button>
                <h2 className="font-['Open_Sans',sans-serif] text-[14px] font-bold leading-5 text-[#dfdbd2]">Instruments</h2>
            </header>
            <div className="grid grid-cols-[105px_105px_1fr] gap-y-[15px] pl-[10px] pt-[15px]">
                <Check label="ELI1V.FI" />
                <Check label="LI.FR" />
                <Check label="LIGHT.CMD" checked className="text-[#e07858]" />
                <Check label="LIN.DE" />
                <Check label="XLI.US" />
            </div>
            <div className="mt-auto flex items-center px-[5px]">
                <Button className="w-[72px] bg-[#6f93c2]">Select all</Button>
                <Button className="ml-[6px] w-[87px] bg-[#6f93c2]">Select none</Button>
                <div className="ml-auto flex h-[22px] w-[110px] items-center border border-[#6f93c2] bg-[#363636] pl-1">
                    <input aria-label="Search" defaultValue="LI" size={1} className="w-[9px] bg-transparent outline-none" />
                    <span className="h-[14px] w-px bg-[#6f93c2]" />
                </div>
            </div>
            <div className="mb-[6px] mt-[17px] flex justify-end gap-[6px] pr-[6px]">
                <Button className="w-9 bg-[#84a318]">OK</Button>
                <Button className="w-[58px] bg-[#860018]">Cancel</Button>
            </div>
        </div>
    );
}

// Yellow hand-made notes laid over the windows
function Annotations() {
    return (
        <div className="pointer-events-none font-['Noto_Sans',sans-serif] text-[10px] font-bold leading-3 text-[#ff0]">
            <svg width="1100" height="680" viewBox="0 0 1100 680" className="absolute left-0 top-0" fill="none" stroke="#ff0" strokeWidth="3" aria-hidden="true">
                <path d="M112.500 254.500H276.500V268.500H112.500zM375.500 615.500H600.500V639.500H375.500z" />
                <path d="M588 502L634 638M616 627l18 11 1-22" strokeWidth="2.500" />
                <path d="M829 469L664 631M666 618l-2 13 11-1" />
            </svg>
            <p className="absolute left-[423px] top-[432px] whitespace-nowrap">
                Masz 3 standardowe, wybierz<br />np smasmallexample potem<br />nacisnij INSTRUMENTS !!!
            </p>
            <p className="absolute left-[839px] top-[403px] whitespace-pre">
                {'Pojawi sie takie okno, wpisz na dole\nEURUSD, tzn znajdz EURUSD i oznacz\na potem znajdz LIGHT i zaznacz\n\n i bedziewtedy obok nazwy strategii w tym\npasku nazwa instrumentu'}
            </p>
        </div>
    );
}

export default function App() {
    return (
        <div className="relative flex min-h-screen flex-col overflow-hidden bg-[#555] font-['DejaVu_Sans',sans-serif] text-[11px] leading-[15px] text-[#f0f0f0]">
            <TopBar />
            <div className="flex flex-1">
                <Launcher />
                <div className="flex min-w-0 flex-1 flex-col">
                    <MenuBar />
                    <div className="flex flex-1">
                        <SidePanel />
                        <div className="flex w-[15px] shrink-0 items-center justify-center">
                            <Svg w={8} h={12}><path d="M0 6l5-4v8zM4 5.500h3v1H4z" fill={G} /><path d="M7 0v12" stroke={G} /></Svg>
                        </div>
                        <main className="flex min-w-0 flex-1 flex-col">
                            <ChartTabs />
                            <div className="border-l border-[#7a7a7a]">
                                <ChartToolbar />
                                <Chart />
                            </div>
                            <div className="h-4 shrink-0" />
                            <BottomTabs />
                            <Tester />
                        </main>
                    </div>
                    <StatusBar />
                </div>
            </div>
            <InstrumentsDialog />
            <Annotations />
        </div>
    );
}
